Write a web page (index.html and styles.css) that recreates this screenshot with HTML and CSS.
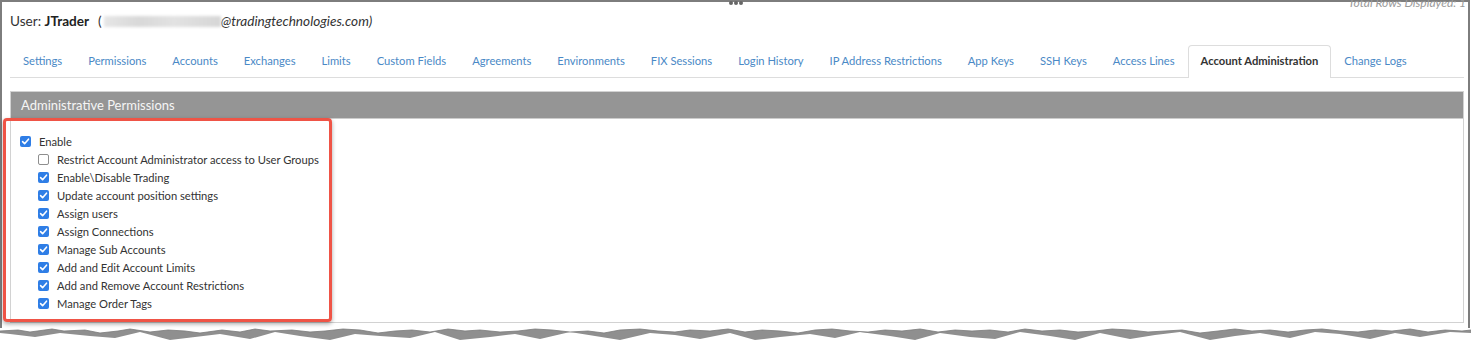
FILE: index.html
```html
<!DOCTYPE html>
<html>
<head>
<meta charset="utf-8">
<title>Account Administration</title>
<link rel="stylesheet" href="styles.css">
</head>
<body>
<div class="frame">
  <div class="dots"><i></i><i></i><i></i></div>
  <div class="total">Total Rows Displayed: 1</div>
  <div class="user">User: <b>JTrader</b> <span class="paren">(</span><span class="blur"></span><span class="mail">@tradingtechnologies.com)</span></div>
  <ul class="tabs">
    <li><a>Settings</a></li>
    <li><a>Permissions</a></li>
    <li><a>Accounts</a></li>
    <li><a>Exchanges</a></li>
    <li><a>Limits</a></li>
    <li><a>Custom Fields</a></li>
    <li><a>Agreements</a></li>
    <li><a>Environments</a></li>
    <li><a>FIX Sessions</a></li>
    <li><a>Login History</a></li>
    <li><a>IP Address Restrictions</a></li>
    <li><a>App Keys</a></li>
    <li><a>SSH Keys</a></li>
    <li><a>Access Lines</a></li>
    <li class="active"><a>Account Administration</a></li>
    <li><a>Change Logs</a></li>
  </ul>
  <section class="panel">
    <div class="panel-head">Administrative Permissions</div>
    <div class="panel-body">
      <div class="row"><span class="cb on"><svg viewBox="0 0 11 11"><path d="M2.6 5.6 L4.6 7.7 L8.5 3.2"/></svg></span>Enable</div>
      <div class="row sub"><span class="cb"></span>Restrict Account Administrator access to User Groups</div>
      <div class="row sub"><span class="cb on"><svg viewBox="0 0 11 11"><path d="M2.6 5.6 L4.6 7.7 L8.5 3.2"/></svg></span>Enable\Disable Trading</div>
      <div class="row sub"><span class="cb on"><svg viewBox="0 0 11 11"><path d="M2.6 5.6 L4.6 7.7 L8.5 3.2"/></svg></span>Update account position settings</div>
      <div class="row sub"><span class="cb on"><svg viewBox="0 0 11 11"><path d="M2.6 5.6 L4.6 7.7 L8.5 3.2"/></svg></span>Assign users</div>
      <div class="row sub"><span class="cb on"><svg viewBox="0 0 11 11"><path d="M2.6 5.6 L4.6 7.7 L8.5 3.2"/></svg></span>Assign Connections</div>
      <div class="row sub"><span class="cb on"><svg viewBox="0 0 11 11"><path d="M2.6 5.6 L4.6 7.7 L8.5 3.2"/></svg></span>Manage Sub Accounts</div>
      <div class="row sub"><span class="cb on"><svg viewBox="0 0 11 11"><path d="M2.6 5.6 L4.6 7.7 L8.5 3.2"/></svg></span>Add and Edit Account Limits</div>
      <div class="row sub"><span class="cb on"><svg viewBox="0 0 11 11"><path d="M2.6 5.6 L4.6 7.7 L8.5 3.2"/></svg></span>Add and Remove Account Restrictions</div>
      <div class="row sub"><span class="cb on"><svg viewBox="0 0 11 11"><path d="M2.6 5.6 L4.6 7.7 L8.5 3.2"/></svg></span>Manage Order Tags</div>
    </div>
  </section>
  <div class="highlight"></div>
</div>
<svg class="torn" viewBox="0 0 1471 15" preserveAspectRatio="none">
  <path class="torn-fill" d="M0,3 L18,2 L30,4 L52,1 L64,3 L85,2 L100,5 L118,3 L130,1 L150,4 L168,2 L185,3 L200,5 L222,2 L240,4 L255,1 L270,3 L292,2 L310,4 L325,3 L343,1 L360,2 L378,5 L395,3 L412,2 L430,4 L448,1 L465,3 L480,2 L500,4 L518,3 L535,1 L552,2 L570,4 L588,3 L604,5 L620,2 L640,1 L658,3 L675,4 L690,2 L710,3 L728,1 L745,4 L762,2 L780,3 L798,5 L815,2 L832,1 L850,3 L868,4 L885,2 L902,3 L920,1 L938,4 L955,2 L972,3 L990,2 L1008,4 L1025,1 L1042,3 L1060,2 L1078,4 L1095,3 L1112,1 L1130,2 L1148,4 L1165,3 L1182,2 L1200,5 L1218,3 L1235,1 L1252,3 L1270,2 L1288,4 L1305,2 L1322,1 L1340,3 L1358,4 L1375,2 L1392,3 L1410,1 L1428,4 L1445,2 L1462,3 L1471,2 L1471,5 L1450,4 L1420,9 L1395,5 L1370,11 L1340,6 L1315,4 L1290,10 L1260,5 L1235,8 L1210,12 L1180,4 L1155,7 L1130,11 L1100,5 L1075,12 L1050,8 L1020,4 L995,11 L970,9 L940,5 L915,12 L890,8 L860,4 L835,10 L810,6 L780,9 L755,12 L730,5 L700,11 L675,7 L650,5 L620,12 L595,8 L570,4 L540,11 L515,6 L490,9 L460,12 L435,4 L410,10 L380,8 L355,6 L330,12 L300,8 L275,4 L250,11 L220,6 L195,9 L170,12 L140,4 L115,10 L90,8 L60,5 L35,9 L10,6 L0,5 Z"/>
  <path class="torn-line" d="M0,3 L18,2 L30,4 L52,1 L64,3 L85,2 L100,5 L118,3 L130,1 L150,4 L168,2 L185,3 L200,5 L222,2 L240,4 L255,1 L270,3 L292,2 L310,4 L325,3 L343,1 L360,2 L378,5 L395,3 L412,2 L430,4 L448,1 L465,3 L480,2 L500,4 L518,3 L535,1 L552,2 L570,4 L588,3 L604,5 L620,2 L640,1 L658,3 L675,4 L690,2 L710,3 L728,1 L745,4 L762,2 L780,3 L798,5 L815,2 L832,1 L850,3 L868,4 L885,2 L902,3 L920,1 L938,4 L955,2 L972,3 L990,2 L1008,4 L1025,1 L1042,3 L1060,2 L1078,4 L1095,3 L1112,1 L1130,2 L1148,4 L1165,3 L1182,2 L1200,5 L1218,3 L1235,1 L1252,3 L1270,2 L1288,4 L1305,2 L1322,1 L1340,3 L1358,4 L1375,2 L1392,3 L1410,1 L1428,4 L1445,2 L1462,3 L1471,2"/>
</svg>
</body>
</html>
```

FILE: styles.css
```css
* { box-sizing: border-box; }

html, body {
  margin: 0;
  padding: 0;
  background: #ffffff;
}

body {
  width: 1471px;
  height: 343px;
  overflow: hidden;
  font-family: Lato, "Open Sans", "Liberation Sans", sans-serif;
  color: #333333;
}

.frame {
  position: relative;
  width: 1470px;
  height: 328px;
  border: 2px solid #7d7d7d;
  border-bottom: 0;
  overflow: visible;
}

.dots {
  position: absolute;
  left: 727px;
  top: -1px;
  display: flex;
  gap: 1px;
}

.dots i {
  display: block;
  width: 4px;
  height: 4px;
  border-radius: 50%;
  background: #666666;
}

.total {
  position: absolute;
  right: 2px;
  top: -6px;
  font-size: 12px;
  line-height: 14px;
  font-style: italic;
  color: #9a9a9a;
}

.user {
  padding: 9px 0 0 8px;
  line-height: 20px;
  height: 29px;
  font-size: 13.6px;
  color: #333333;
  display: flex;
  align-items: center;
  white-space: pre;
}

.user b {
  font-weight: 700;
  color: #222222;
}

.paren {
  margin-left: 9px;
}

.blur {
  display: inline-block;
  width: 117px;
  height: 11px;
  margin-left: 2px;
  background: linear-gradient(90deg, #e6e6e6, #d8d8d8 30%, #e2e2e2 60%, #d6d6d6);
  filter: blur(1.5px);
}

.mail {
  font-style: italic;
  color: #333333;
}

.tabs {
  list-style: none;
  display: flex;
  margin: 14px 4px 0 8px;
  padding: 0;
  height: 33px;
  border-bottom: 1px solid #dddddd;
  white-space: nowrap;
}

.tabs li {
  flex: none;
}

.tabs li a {
  display: block;
  padding: 0 12px;
  height: 33px;
  line-height: 29px;
  font-size: 11.2px;
  color: #4a89c6;
  border: 1px solid transparent;
  border-bottom: 0;
  border-radius: 4px 4px 0 0;
}

.tabs li.active a {
  border-color: #dddddd;
  background: #ffffff;
  color: #333333;
  font-weight: 700;
}

.panel {
  margin: 13px 4px 0 8px;
  border: 1px solid #d2d2d2;
}

.panel-head {
  height: 27px;
  line-height: 26px;
  padding-left: 10px;
  background: #959595;
  color: #f5f5f5;
  font-size: 13px;
  border-bottom: 1px solid #cccccc;
}

.panel-body {
  padding: 13px 0 10px 9px;
}

.row {
  display: flex;
  align-items: center;
  gap: 8px;
  height: 18px;
  font-size: 11.2px;
  color: #333333;
  white-space: nowrap;
}

.row.sub {
  padding-left: 18px;
}

.cb {
  display: block;
  flex: none;
  width: 11px;
  height: 11px;
  border-radius: 2px;
  border: 1px solid #8e8e8e;
  background: #ffffff;
}

.cb.on {
  border: 0;
  background: #2f7ee6;
}

.cb svg {
  display: block;
  width: 11px;
  height: 11px;
}

.cb svg path {
  fill: none;
  stroke: #ffffff;
  stroke-width: 1.6;
  stroke-linecap: round;
  stroke-linejoin: round;
}

.highlight {
  position: absolute;
  left: 1px;
  top: 116px;
  width: 329px;
  height: 204px;
  border: 3px solid #ef5446;
  border-radius: 4px;
  box-shadow: 0 2px 4px rgba(0, 0, 0, 0.35);
  pointer-events: none;
}

.torn {
  display: block;
  width: 1471px;
  height: 15px;
}

.torn-fill {
  fill: #8f8f8f;
}

.torn-line {
  fill: none;
  stroke: #7a7a7a;
  stroke-width: 0.8;
}
```
